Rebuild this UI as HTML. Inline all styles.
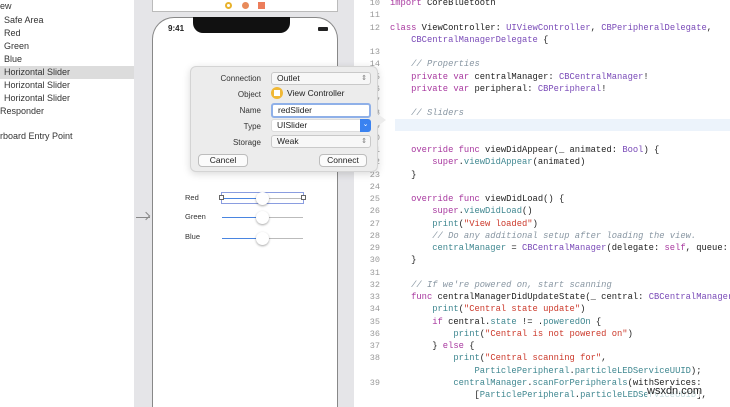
<!DOCTYPE html>
<html><head><style>
*{margin:0;padding:0;box-sizing:border-box}
html,body{width:730px;height:407px;overflow:hidden}
body{background:#fff;position:relative;font-family:"Liberation Sans",sans-serif}
.a{position:absolute}
.nav div{position:absolute;left:0;font-size:9px;color:#333;width:134px;height:13px;line-height:13px}
.code{position:absolute;left:354px;top:-3px;font-family:"Liberation Mono",monospace;font-size:8.8px;line-height:12.25px;color:#222}
.code .l{height:12.25px;position:relative;padding-left:36px;white-space:pre}
.code .n{position:absolute;left:0;width:26px;text-align:right;color:#999;font-size:8.5px}
.k{color:#a8389f}.t{color:#7a4bb8}.c{color:#8896a2;font-style:italic}.s{color:#cc3a2c}.m{color:#3f8790}
.lbl{position:absolute;font-size:8px;color:#333;text-align:right;width:70px;left:0}
.fld{position:absolute;left:80px;width:100px;height:13px;border:1px solid #c9c9c9;border-radius:3px;background:#f7f7f7;font-size:8.5px;padding-left:5px;line-height:11px;color:#222}
.btn{position:absolute;height:13px;border:1px solid #bdbdbd;border-radius:4px;background:#fbfbfb;font-size:8.5px;text-align:center;line-height:11px;color:#222}
</style></head><body>
<div class="nav">
<div style="top:0;">ew</div>
<div style="top:14px;padding-left:4px">Safe Area</div>
<div style="top:27px;padding-left:4px">Red</div>
<div style="top:40px;padding-left:4px">Green</div>
<div style="top:53px;padding-left:4px">Blue</div>
<div style="top:66px;padding-left:4px;background:#dcdcdc">Horizontal Slider</div>
<div style="top:79px;padding-left:4px">Horizontal Slider</div>
<div style="top:92px;padding-left:4px">Horizontal Slider</div>
<div style="top:105px">Responder</div>
<div style="top:130px">rboard Entry Point</div>
</div>
<div class="a" style="left:134px;top:0;width:220px;height:407px;background:#e5e5e8"></div>
<div class="a" style="left:152px;top:0;width:186px;height:12px;background:#fff;border:1px solid #bbb;border-top:none"></div>
<div class="a" style="left:225px;top:2px;width:7px;height:7px;border-radius:50%;border:2px solid #e8b22c"></div>
<div class="a" style="left:242px;top:2px;width:7px;height:7px;border-radius:50%;background:#e88a5a"></div>
<div class="a" style="left:258px;top:2px;width:7px;height:7px;background:#ec7d5b"></div>
<div class="a" style="left:152px;top:17px;width:186px;height:392px;background:#fff;border:1px solid #888;border-bottom:none;border-radius:22px 22px 0 0"></div>
<div class="a" style="left:193px;top:17px;width:97px;height:16px;background:#111;border-radius:0 0 10px 10px"></div>
<div class="a" style="left:168px;top:24px;font-size:8px;font-weight:bold;color:#222">9:41</div>
<div class="a" style="left:318px;top:27px;width:10px;height:4px;background:#222;border-radius:1px"></div>
<div class="a" style="left:136px;top:217px;width:14px;height:1px;background:#888"></div>
<div class="a" style="left:143px;top:213px;width:6px;height:6px;border-top:1px solid #888;border-right:1px solid #888;transform:rotate(45deg)"></div>
<div class="a" style="left:185px;top:193px;font-size:7.5px;color:#333">Red</div>
<div class="a" style="left:185px;top:212px;font-size:7.5px;color:#333">Green</div>
<div class="a" style="left:185px;top:232px;font-size:7.5px;color:#333">Blue</div>
<div class="a" style="left:221px;top:192px;width:83px;height:12px;border:1px solid #8a9de0"></div>
<div class="a" style="left:222px;top:198px;width:41px;height:1px;background:#4a85e0"></div><div class="a" style="left:263px;top:198px;width:40px;height:1px;background:#bbb"></div>
<div class="a" style="left:222px;top:217px;width:41px;height:1px;background:#4a85e0"></div><div class="a" style="left:263px;top:217px;width:40px;height:1px;background:#bbb"></div>
<div class="a" style="left:222px;top:238px;width:41px;height:1px;background:#4a85e0"></div><div class="a" style="left:263px;top:238px;width:40px;height:1px;background:#bbb"></div>
<div class="a" style="left:256px;top:192px;width:13px;height:13px;border-radius:50%;background:#fff;box-shadow:0 1px 2px rgba(0,0,0,.35)"></div>
<div class="a" style="left:256px;top:211px;width:13px;height:13px;border-radius:50%;background:#fff;box-shadow:0 1px 2px rgba(0,0,0,.35)"></div>
<div class="a" style="left:256px;top:232px;width:13px;height:13px;border-radius:50%;background:#fff;box-shadow:0 1px 2px rgba(0,0,0,.35)"></div>
<div class="a" style="left:219px;top:195px;width:5px;height:5px;border:1px solid #666;background:#fff"></div>
<div class="a" style="left:301px;top:195px;width:5px;height:5px;border:1px solid #666;background:#fff"></div>

<div class="a" style="left:395px;top:119px;width:335px;height:12px;background:#ecf3fb"></div>
<div class="code"><div class="l"><span class="n">10</span><span class="k">import</span> CoreBluetooth</div><div class="l"><span class="n">11</span></div><div class="l"><span class="n">12</span><span class="k">class</span> ViewController: <span class="t">UIViewController</span>, <span class="t">CBPeripheralDelegate</span>,</div><div class="l">    <span class="t">CBCentralManagerDelegate</span> {</div><div class="l"><span class="n">13</span></div><div class="l"><span class="n">14</span>    <span class="c">// Properties</span></div><div class="l"><span class="n">15</span>    <span class="k">private var</span> centralManager: <span class="t">CBCentralManager</span>!</div><div class="l"><span class="n">16</span>    <span class="k">private var</span> peripheral: <span class="t">CBPeripheral</span>!</div><div class="l"><span class="n">17</span></div><div class="l"><span class="n">18</span>    <span class="c">// Sliders</span></div><div class="l"><span class="n">19</span></div><div class="l"><span class="n">20</span></div><div class="l"><span class="n">21</span>    <span class="k">override func</span> viewDidAppear(_ animated: <span class="t">Bool</span>) {</div><div class="l"><span class="n">22</span>        <span class="k">super</span>.<span class="m">viewDidAppear</span>(animated)</div><div class="l"><span class="n">23</span>    }</div><div class="l"><span class="n">24</span></div><div class="l"><span class="n">25</span>    <span class="k">override func</span> viewDidLoad() {</div><div class="l"><span class="n">26</span>        <span class="k">super</span>.<span class="m">viewDidLoad</span>()</div><div class="l"><span class="n">27</span>        <span class="m">print</span>(<span class="s">"View loaded"</span>)</div><div class="l"><span class="n">28</span>        <span class="c">// Do any additional setup after loading the view.</span></div><div class="l"><span class="n">29</span>        <span class="m">centralManager</span> = <span class="t">CBCentralManager</span>(delegate: <span class="k">self</span>, queue: <span class="k">nil</span>)</div><div class="l"><span class="n">30</span>    }</div><div class="l"><span class="n">31</span></div><div class="l"><span class="n">32</span>    <span class="c">// If we're powered on, start scanning</span></div><div class="l"><span class="n">33</span>    <span class="k">func</span> centralManagerDidUpdateState(_ central: <span class="t">CBCentralManager</span>) {</div><div class="l"><span class="n">34</span>        <span class="m">print</span>(<span class="s">"Central state update"</span>)</div><div class="l"><span class="n">35</span>        <span class="k">if</span> central.<span class="m">state</span> != .<span class="m">poweredOn</span> {</div><div class="l"><span class="n">36</span>            <span class="m">print</span>(<span class="s">"Central is not powered on"</span>)</div><div class="l"><span class="n">37</span>        } <span class="k">else</span> {</div><div class="l"><span class="n">38</span>            <span class="m">print</span>(<span class="s">"Central scanning for"</span>,</div><div class="l">                <span class="m">ParticlePeripheral</span>.<span class="m">particleLEDServiceUUID</span>);</div><div class="l"><span class="n">39</span>            <span class="m">centralManager</span>.<span class="m">scanForPeripherals</span>(withServices:</div><div class="l">                [<span class="m">ParticlePeripheral</span>.<span class="m">particleLEDServiceUUID</span>],</div></div>

<div class="a" style="left:190px;top:66px;width:188px;height:106px;background:#ececec;border:1px solid #d4d4d4;border-radius:6px;box-shadow:0 2px 8px rgba(0,0,0,.15)">
<div class="lbl" style="top:7px">Connection</div>
<div class="fld" style="top:5px">Outlet<span style="position:absolute;right:3px;font-size:7px;color:#777">⇕</span></div>
<div class="lbl" style="top:23px">Object</div>
<div class="a" style="left:80px;top:20px;width:12px;height:12px;border-radius:50%;background:#f0b836"><div class="a" style="left:3px;top:3px;width:6px;height:6px;background:#fff"></div></div>
<div class="a" style="left:96px;top:21px;font-size:8.5px;color:#222">View Controller</div>
<div class="lbl" style="top:39px">Name</div>
<div class="fld" style="top:36px;height:15px;background:#fff;border:2px solid #8fb0e8;line-height:11px">redSlider</div>
<div class="lbl" style="top:55px">Type</div>
<div class="fld" style="top:52px;background:#fff;border-color:#ddd">UISlider<div class="a" style="right:-1px;top:-1px;width:11px;height:13px;background:#3a82f0;border-radius:0 3px 3px 0;color:#fff;font-size:7px;text-align:center">⌄</div></div>
<div class="lbl" style="top:71px">Storage</div>
<div class="fld" style="top:68px">Weak<span style="position:absolute;right:3px;font-size:7px;color:#777">⇕</span></div>
<div class="btn" style="left:7px;top:87px;width:50px">Cancel</div>
<div class="btn" style="left:128px;top:87px;width:48px">Connect</div>
</div>
<div class="a" style="left:372px;top:110px;width:0;height:0;border-top:10px solid transparent;border-bottom:10px solid transparent;border-left:14px solid #ececec"></div>
<div class="a" style="left:647px;top:385px;font-size:11px;color:#222;background:rgba(255,255,255,.7)">wsxdn.com</div>
</body></html>
